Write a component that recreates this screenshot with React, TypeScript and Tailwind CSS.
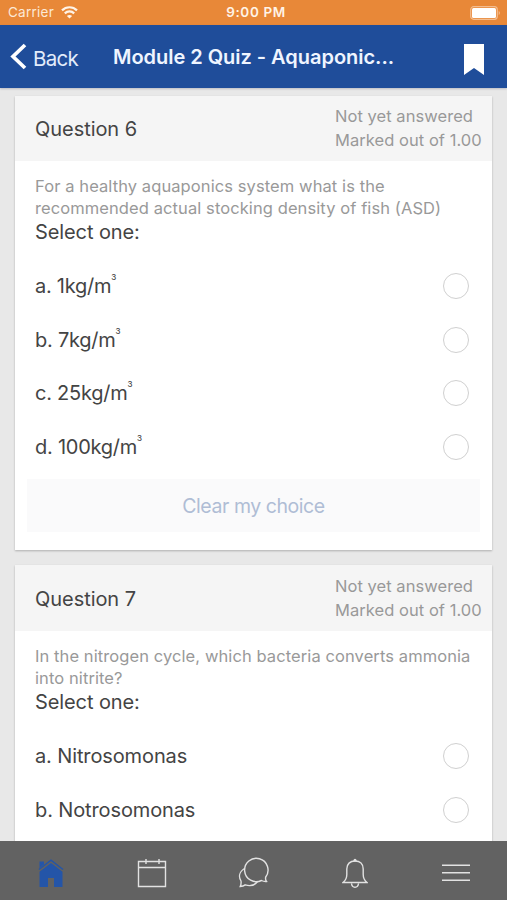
const questions = [
  {
    number: 6,
    lines: ['For a healthy aquaponics system what is the', 'recommended actual stocking density of fish (ASD)'],
    options: [
      { text: 'a. 1kg/m', cubed: true },
      { text: 'b. 7kg/m', cubed: true },
      { text: 'c. 25kg/m', cubed: true },
      { text: 'd. 100kg/m', cubed: true },
    ],
    clearable: true,
  },
  {
    number: 7,
    lines: ['In the nitrogen cycle, which bacteria converts ammonia', 'into nitrite?'],
    options: [
      { text: 'a. Nitrosomonas', cubed: false },
      { text: 'b. Notrosomonas', cubed: false },
    ],
    clearable: false,
  },
]

function StatusBar() {
  return (
    <div className="grid h-[25px] shrink-0 grid-cols-3 items-center bg-[#e88838] px-2 text-white">
      <div className="flex items-center gap-[7px]">
        <span className="text-[13.5px] leading-[25px] tracking-[0.25px] text-[#fce9d6]">Carrier</span>
        <svg width="17" height="13" viewBox="0 0 17 13" fill="none" stroke="#fff4e8" strokeWidth="2.2">
          <path d="M1 4.400C5.200.2 11.800.2 16 4.400" />
          <path d="M3.800 7.400c2.700-2.600 6.700-2.600 9.400 0" />
          <path d="M8.500 12.500 5.900 9.900c1.500-1.300 3.700-1.300 5.200 0z" fill="#fff4e8" stroke="none" />
        </svg>
      </div>
      <span className="pl-[5px] text-center text-[13.5px] leading-[25px] font-semibold tracking-[0.6px] text-[#fff3e6]">
        9:00 PM
      </span>
      <svg width="31" height="14" viewBox="0 0 31 14" className="-mr-[2px] justify-self-end">
        <rect x=".7" y=".7" width="26.6" height="12.6" rx="3" fill="none" stroke="#f3bd90" strokeWidth="1.2" />
        <rect x="2" y="2" width="24" height="10" rx="1.5" fill="white" />
        <path d="M28.700 5v4c1.600-.6 1.600-3.400 0-4z" fill="#f3bd90" />
      </svg>
    </div>
  )
}

function NavBar() {
  return (
    <header className="z-10 flex h-[63px] shrink-0 items-center bg-[#1f4d9a] text-white shadow-[0_1px_2px_rgba(0,0,40,0.2)]">
      <button className="ml-[10px] flex w-[103px] items-center gap-[6px]">
        <svg width="17" height="27" viewBox="0 0 17 27" fill="none" stroke="white" strokeWidth="3.7">
          <path d="M15 2 3 13.500 15 25" />
        </svg>
        <span className="mt-[5px] text-[20.5px] leading-6 tracking-[-0.75px] text-[#e2ecfb]">Back</span>
      </button>
      <h1 className="mt-[1px] text-[20px] font-semibold whitespace-nowrap tracking-[-0.03px] text-[#eff5ff]">
        Module 2 Quiz - Aquaponic...
      </h1>
      <svg width="20" height="31" viewBox="0 0 20 31" fill="white" className="mt-[6px] mr-[23px] ml-auto">
        <path d="M0 0h20v31L10 24 0 31z" />
      </svg>
    </header>
  )
}

function QuestionCard({ question }: { question: (typeof questions)[number] }) {
  return (
    <section className="shrink-0 bg-white pb-[18px] shadow-[0_1px_2px_rgba(0,0,0,0.25)]">
      <div className="flex h-[65.5px] items-center justify-between bg-[#f5f5f5] pl-5">
        <h2 className="mt-[2px] text-[20px] tracking-[-0.05px]">Question {question.number}</h2>
        <div className="w-[157px] text-[16.5px] leading-[24.5px] tracking-[0.05px] whitespace-nowrap text-[#999]">
          <p>Not yet answered</p>
          <p>Marked out of 1.00</p>
        </div>
      </div>
      <div className="px-5 pt-[14px]">
        <div className="text-[16.5px] leading-[22px] tracking-[0.09px] whitespace-nowrap text-[#999]">
          {question.lines.map((line) => (
            <p key={line}>{line}</p>
          ))}
        </div>
        <p className="text-[20px] leading-[26px] tracking-[-0.1px]">Select one:</p>
      </div>
      <div className="pt-[14px]">
        {question.options.map((option) => (
          <label key={option.text} className="flex h-[53.8px] items-center justify-between pr-[23px] pl-5">
            <span className={option.cubed ? 'flex text-[20px] tracking-[-0.25px]' : 'text-[20px] tracking-[-0.12px]'}>
              {option.text}
              {option.cubed && <sup className="top-0 mt-[2px] h-2 text-[8px] leading-2 font-medium">3</sup>}
            </span>
            <span className="size-[26px] rounded-full border-[1.5px] border-[#d0d0d0]" />
          </label>
        ))}
      </div>
      {question.clearable && (
        <div className="px-3 pt-[5px]">
          <button className="h-[53px] w-full bg-[#fafafb] pt-[2px] text-[19.5px] tracking-[-0.45px] text-[#afbdd5]">
            Clear my choice
          </button>
        </div>
      )}
    </section>
  )
}

function TabBar() {
  return (
    <nav className="z-10 grid h-[59px] shrink-0 grid-cols-5 items-center bg-[#626262] pt-[5px] text-[#e2e2e2]">
      <svg width="26" height="30" viewBox="0 0 26 30" className="mx-auto" fill="#2455a8">
        <path d="M1.500 3.500h4.500v3L1.500 10z" />
        <path d="m1 11.500 12-9.300 12 9.300" fill="none" stroke="#2455a8" strokeWidth="1.500" />
        <path d="M1.500 13.800 13 5l11.500 8.800V29H16v-9h-6v9H1.500z" />
      </svg>
      <svg width="30" height="30" viewBox="0 0 30 30" className="mx-auto" fill="none" stroke="currentColor" strokeWidth="1.4">
        <path d="M1.500 3.500h27v25h-27zM1.500 9.500h27M9 1v5M22 1v5" />
      </svg>
      <svg width="32" height="32" viewBox="0 0 32 32" className="mx-auto" fill="none" stroke="currentColor" strokeWidth="1.4">
        <path d="M29.500 24.500c-.9-1.300-1.100-3-.8-4.500A11.700 11.700 0 1 0 24.500 23.500c1.500.8 3.200 1.200 5 1z" />
        <path d="M7.500 11.500C2 15 1.500 20 4 24c.3 1.800 0 3.700-.8 5.500 2 0 3.800-.6 5-1.600 5 1.500 9.500.5 12.300-3.400" />
      </svg>
      <svg width="26" height="30" viewBox="0 0 26 30" className="mx-auto" fill="none" stroke="currentColor" strokeWidth="1.4">
        <path d="M1 24.500c2.500-2 3.800-4 3.800-8V11C4.800 6 8 3 13 3s8.200 3 8.200 8v5.500c0 4 1.300 6 3.800 8zM9.500 25.500c.5 5 6.500 5 7 0" />
        <circle cx="13" cy="2.300" r="1.500" fill="currentColor" stroke="none" />
      </svg>
      <svg width="28" height="18" viewBox="0 0 28 18" className="mx-auto" stroke="currentColor" strokeWidth="1.6">
        <path d="M0 1.300h28M0 8.800h28M0 16.300h28" />
      </svg>
    </nav>
  )
}

export default function App() {
  return (
    <div className="flex h-[900px] w-[507px] flex-col overflow-hidden bg-[#e8e8e8] font-[Inter,'Liberation_Sans',sans-serif] text-[#444]">
      <StatusBar />
      <NavBar />
      <main className="flex min-h-0 flex-1 flex-col gap-[15.2px] overflow-hidden px-[15px] pt-[7.5px]">
        {questions.map((question) => (
          <QuestionCard key={question.number} question={question} />
        ))}
      </main>
      <TabBar />
    </div>
  )
}
